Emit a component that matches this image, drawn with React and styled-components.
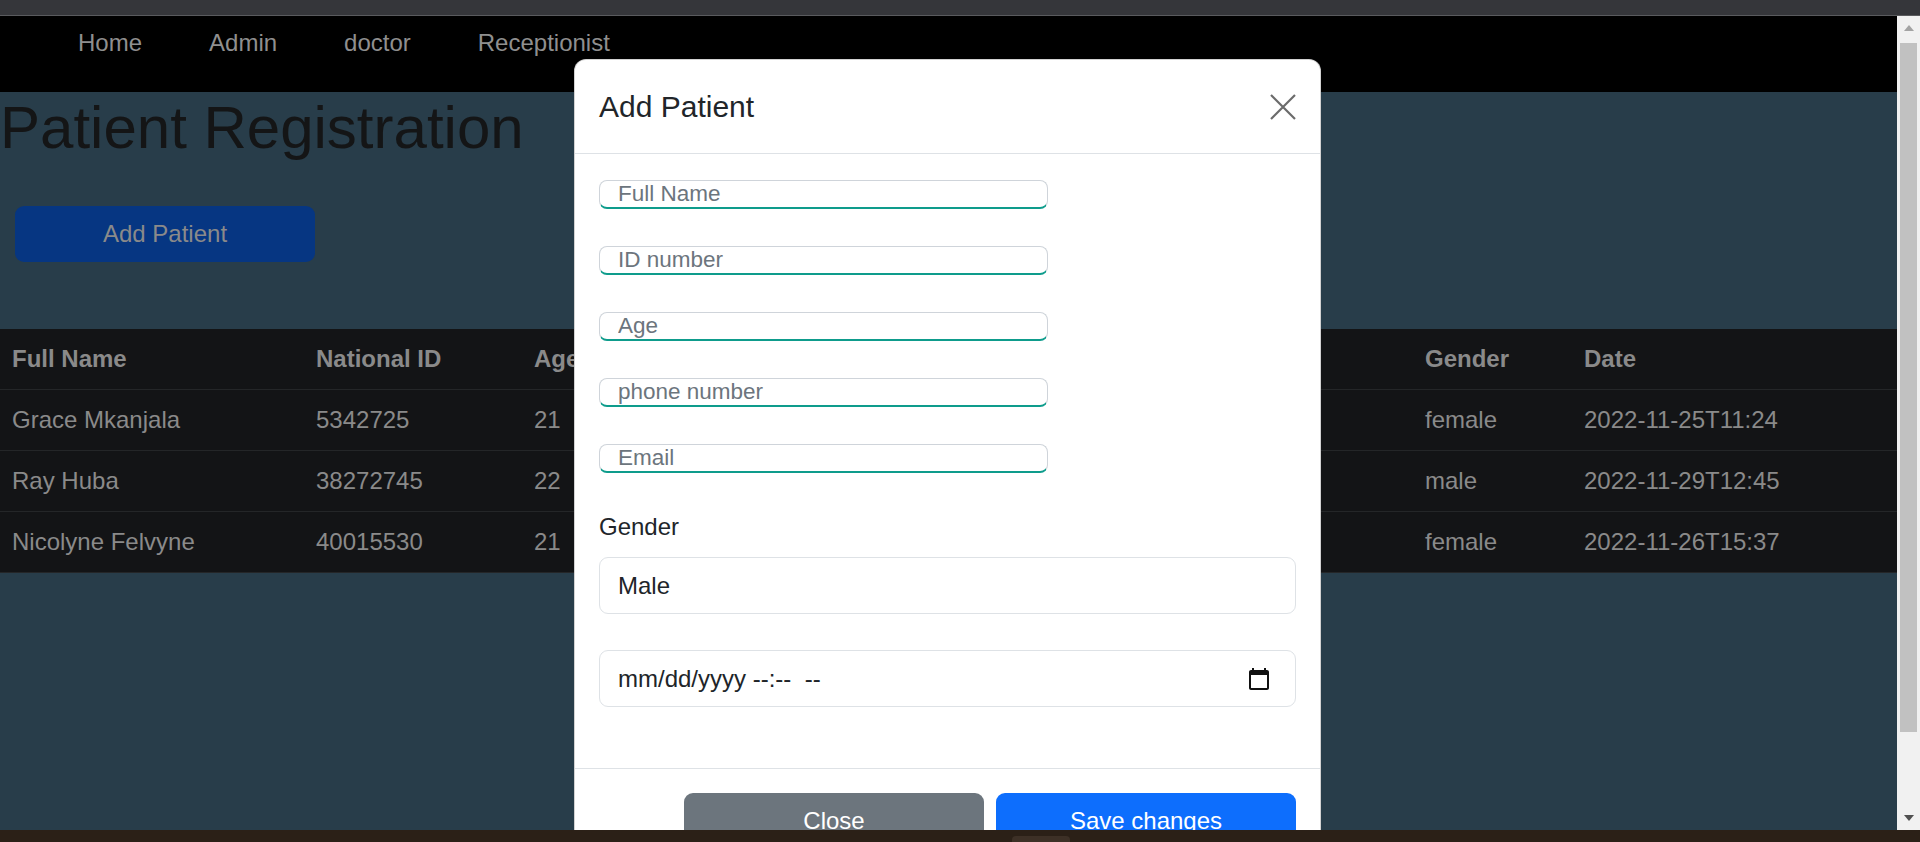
import React from 'react'
import styled, { createGlobalStyle } from 'styled-components'

const GlobalStyle = createGlobalStyle`
  html, body {
    margin: 0;
    padding: 0;
  }
  body {
    font-family: "Liberation Sans", Arial, sans-serif;
    background: #2b2017;
    overflow: hidden;
  }
  * {
    box-sizing: border-box;
  }
`

const patients = [
  { name: 'Grace Mkanjala', id: '5342725', age: '21', phone: '0712345678', email: 'grace@gmail.com', gender: 'female', date: '2022-11-25T11:24' },
  { name: 'Ray Huba', id: '38272745', age: '22', phone: '0722456789', email: 'ray@gmail.com', gender: 'male', date: '2022-11-29T12:45' },
  { name: 'Nicolyne Felvyne', id: '40015530', age: '21', phone: '0733567890', email: 'nicolyne@gmail.com', gender: 'female', date: '2022-11-26T15:37' },
]

const colWidths = [304, 218, 200, 260, 431, 159, 325]

export default function App() {
  return (
    <Screen>
      <GlobalStyle />
      <TopBar />
      <Viewport>
        <Page>
          <Navbar>
            <NavList>
              <li><NavLink href="#">Home</NavLink></li>
              <li><NavLink href="#">Admin</NavLink></li>
              <li><NavLink href="#">doctor</NavLink></li>
              <li><NavLink href="#">Receptionist</NavLink></li>
            </NavList>
          </Navbar>

          <Title>Patient Registration</Title>
          <Toolbar>
            <AddButton>Add Patient</AddButton>
          </Toolbar>

          <Table>
            <colgroup>
              {colWidths.map((w, i) => <col key={i} style={{ width: w }} />)}
            </colgroup>
            <thead>
              <tr>
                <Th>Full Name</Th>
                <Th>National ID</Th>
                <Th>Age</Th>
                <Th>Phone Number</Th>
                <Th>Email</Th>
                <Th>Gender</Th>
                <Th>Date</Th>
              </tr>
            </thead>
            <tbody>
              {patients.map((p) => (
                <tr key={p.id}>
                  <Td>{p.name}</Td>
                  <Td>{p.id}</Td>
                  <Td>{p.age}</Td>
                  <Td>{p.phone}</Td>
                  <Td>{p.email}</Td>
                  <Td>{p.gender}</Td>
                  <Td>{p.date}</Td>
                </tr>
              ))}
            </tbody>
          </Table>

          <ModalLayer>
            <Modal>
              <ModalHeader>
                <ModalTitle>Add Patient</ModalTitle>
                <CloseX aria-label="Close">
                  <svg width="26" height="26" viewBox="0 0 26 26">
                    <path d="M1 1L25 25M25 1L1 25" stroke="#6b6b6b" strokeWidth="2.2" fill="none" />
                  </svg>
                </CloseX>
              </ModalHeader>

              <ModalBody>
                <LineInput placeholder="Full Name" />
                <LineInput placeholder="ID number" />
                <LineInput placeholder="Age" />
                <LineInput placeholder="phone number" />
                <LineInput placeholder="Email" />

                <Label>Gender</Label>
                <Select defaultValue="Male">
                  <option>Male</option>
                  <option>Female</option>
                </Select>

                <DateBox>
                  <DateText readOnly value="mm/dd/yyyy --:--  --" />
                  <svg width="24" height="24" viewBox="0 0 24 24">
                    <path
                      d="M20 3h-1V1h-2v2H7V1H5v2H4c-1.1 0-2 .9-2 2v16c0 1.1.9 2 2 2h16c1.1 0 2-.9 2-2V5c0-1.1-.9-2-2-2zm0 18H4V8h16v13z"
                      fill="#111"
                    />
                  </svg>
                </DateBox>
              </ModalBody>

              <ModalFooter>
                <FooterButton variant="secondary">Close</FooterButton>
                <FooterButton variant="primary">Save changes</FooterButton>
              </ModalFooter>
            </Modal>
          </ModalLayer>
        </Page>

        <Scrollbar>
          <ScrollArrow>
            <svg width="10" height="6" viewBox="0 0 10 6"><path d="M0 6L5 0L10 6Z" fill="#a3a3a3" /></svg>
          </ScrollArrow>
          <Thumb />
          <ScrollSpacer />
          <ScrollArrow>
            <svg width="10" height="6" viewBox="0 0 10 6"><path d="M0 0L10 0L5 6Z" fill="#505050" /></svg>
          </ScrollArrow>
        </Scrollbar>
      </Viewport>
      <Taskbar>
        <TaskItem />
      </Taskbar>
    </Screen>
  )
}

const Screen = styled.div`
  width: 1920px;
  height: 842px;
  display: flex;
  flex-direction: column;
  overflow: hidden;
`
const TopBar = styled.div`
  flex: none;
  height: 16px;
  background: #35363a;
  border-bottom: 1px solid #5a5b5e;
`
const Viewport = styled.div`
  flex: 1;
  min-height: 0;
  display: flex;
`
const Page = styled.div`
  flex: 1;
  position: relative;
  overflow: hidden;
  background: #283d4a;
`
const Navbar = styled.nav`
  height: 76px;
  background: #000;
  padding: 9px 0 0 78px;
`
const NavList = styled.ul`
  list-style: none;
  margin: 0;
  padding: 0;
  display: flex;
  gap: 67px;
`
const NavLink = styled.a`
  color: #8f8f8f;
  font-size: 24px;
  line-height: 36px;
  text-decoration: none;
`
const Title = styled.h1`
  margin: 0 0 12px;
  font-size: 60px;
  line-height: 72px;
  font-weight: 400;
  color: #141516;
`
const Toolbar = styled.div`
  padding: 30px 0 67px 15px;
`
const AddButton = styled.button`
  display: block;
  width: 300px;
  height: 56px;
  border: none;
  border-radius: 9px;
  background: #063682;
  color: #8a8a8a;
  font-family: inherit;
  font-size: 24px;
`
const Table = styled.table`
  width: 1897px;
  table-layout: fixed;
  border-collapse: collapse;
  background: #131416;
`
const Th = styled.th`
  text-align: left;
  padding: 12px;
  font-size: 24px;
  line-height: 36px;
  font-weight: 700;
  color: #8a8a8a;
  border-bottom: 1px solid #242628;
  white-space: nowrap;
  overflow: hidden;
`
const Td = styled.td`
  padding: 12px;
  font-size: 24px;
  line-height: 36px;
  color: #8a8a8a;
  border-bottom: 1px solid #242628;
  white-space: nowrap;
  overflow: hidden;
`
const ModalLayer = styled.div`
  position: absolute;
  inset: 0;
  display: flex;
  justify-content: center;
  align-items: flex-start;
  padding: 43px 2px 0 0;
`
const Modal = styled.div`
  width: 747px;
  background: #fff;
  border: 1px solid rgba(0, 0, 0, 0.175);
  border-radius: 12px;
  flex: none;
`
const ModalHeader = styled.div`
  display: flex;
  align-items: center;
  justify-content: space-between;
  padding: 24px;
  border-bottom: 1px solid #dee2e6;
`
const ModalTitle = styled.h5`
  margin: 0;
  font-size: 30px;
  line-height: 45px;
  font-weight: 400;
  color: #212529;
`
const CloseX = styled.button`
  display: flex;
  padding: 0;
  border: none;
  background: none;
`
const ModalBody = styled.div`
  display: flex;
  flex-direction: column;
  align-items: flex-start;
  padding: 26px 24px 24px;
`
const LineInput = styled.input`
  width: 449px;
  height: 29px;
  margin: 0 0 37px;
  padding: 0 18px;
  border: 1px solid #cfd4da;
  border-bottom: 2px solid #0e9c8c;
  border-radius: 8px;
  font-family: inherit;
  font-size: 22.5px;
  color: #212529;
  outline: none;
  &::placeholder {
    color: #6c757d;
  }
`
const Label = styled.label`
  font-size: 24px;
  line-height: 36px;
  color: #212529;
  margin: -1px 0 12px;
`
const Select = styled.select`
  width: 100%;
  height: 57px;
  margin-bottom: 36px;
  padding: 0 18px;
  border: 1px solid #dee2e6;
  border-radius: 9px;
  appearance: none;
  background: #fff;
  font-family: inherit;
  font-size: 24px;
  color: #212529;
`
const DateBox = styled.div`
  width: 100%;
  height: 57px;
  margin-bottom: 37px;
  padding: 0 24px 0 18px;
  display: flex;
  align-items: center;
  border: 1px solid #dee2e6;
  border-radius: 9px;
`
const DateText = styled.input`
  flex: 1;
  border: none;
  outline: none;
  padding: 0;
  font-family: inherit;
  font-size: 24px;
  color: #212529;
  white-space: pre;
`
const ModalFooter = styled.div`
  display: flex;
  justify-content: flex-end;
  gap: 12px;
  padding: 24px;
  border-top: 1px solid #dee2e6;
`
const FooterButton = styled.button`
  width: 300px;
  height: 56px;
  border: none;
  border-radius: 9px;
  background: ${(p) => (p.variant === 'primary' ? '#0d6efd' : '#6c757d')};
  color: #fff;
  font-family: inherit;
  font-size: 24px;
`
const Scrollbar = styled.div`
  width: 23px;
  flex: none;
  display: flex;
  flex-direction: column;
  align-items: center;
  background: #f1f1f1;
`
const ScrollArrow = styled.div`
  height: 24px;
  display: flex;
  align-items: center;
  justify-content: center;
`
const Thumb = styled.div`
  width: 17px;
  height: 689px;
  margin-top: 3px;
  background: #c1c1c1;
`
const ScrollSpacer = styled.div`
  flex: 1;
`
const Taskbar = styled.div`
  flex: none;
  height: 12px;
  background: #2b2017;
  padding: 6px 0 0 1012px;
`
const TaskItem = styled.div`
  width: 58px;
  height: 6px;
  border-radius: 4px 4px 0 0;
  background: #3d3026;
`
